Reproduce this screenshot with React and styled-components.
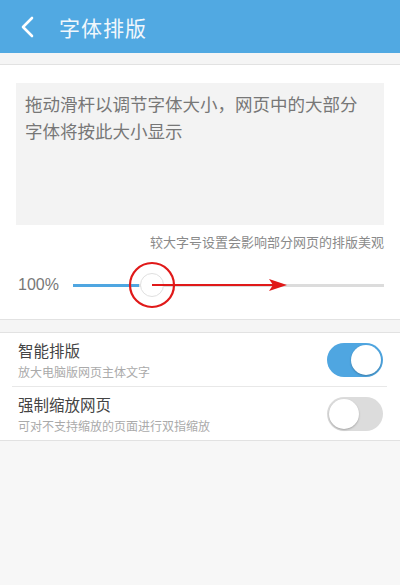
import React from 'react';
import styled, { createGlobalStyle } from 'styled-components';

const GlobalStyle = createGlobalStyle`
  html, body {
    margin: 0;
    padding: 0;
    background: #f7f7f7;
    font-family: "Noto Sans CJK SC", "Noto Sans", sans-serif;
  }
`;

const Page = styled.div`
  width: 400px;
  min-height: 585px;
  background: #f7f7f7;
`;

const Header = styled.div`
  height: 53px;
  background: #51a9e2;
  display: flex;
  align-items: center;
  padding-left: 20px;
  box-sizing: border-box;
`;

const BackButton = styled.svg`
  width: 16px;
  height: 22px;
  margin-right: 23px;
`;

const HeaderTitle = styled.div`
  color: #f0f7fc;
  font-size: 21px;
  letter-spacing: 1px;
`;

const Strip = styled.div`
  height: 11px;
  background: #f5f5f5;
  border-bottom: 1px solid #e2e2e2;
`;

const Panel = styled.div`
  background: #fff;
  padding: 18px 16px 0;
  border-bottom: 1px solid #e2e2e2;
`;

const Preview = styled.div`
  height: 142px;
  background: #f3f3f3;
  padding: 7px 20px 6px 9px;
  box-sizing: border-box;
  color: #777;
  font-size: 17.5px;
  line-height: 27px;
`;

const Hint = styled.div`
  margin-top: 8px;
  text-align: right;
  color: #8a8a8a;
  font-size: 13px;
  line-height: 18px;
`;

const SliderRow = styled.div`
  height: 68px;
  display: flex;
  align-items: center;
`;

const Percent = styled.div`
  width: 55px;
  padding-left: 2px;
  color: #777;
  font-family: "Liberation Sans", Arial, sans-serif;
  font-size: 16px;
`;

const Track = styled.div`
  position: relative;
  flex: 1;
  height: 3px;
  background: #dcdcdc;
`;

const Fill = styled.div`
  position: absolute;
  left: 0;
  top: 0;
  height: 3px;
  background: #4fa6e1;
`;

const Thumb = styled.div`
  position: absolute;
  top: -11px;
  width: 24px;
  height: 24px;
  border-radius: 50%;
  background: #fff;
  border: 1px solid #e0e0e0;
  box-sizing: border-box;
`;

const Annotation = styled.svg`
  position: absolute;
  left: 0;
  top: -26px;
  overflow: visible;
`;

const Gap = styled.div`
  height: 12px;
  background: #f5f5f5;
  border-bottom: 1px solid #e2e2e2;
`;

const List = styled.div`
  background: #fff;
  border-bottom: 1px solid #e2e2e2;
`;

const Row = styled.div`
  height: 53px;
  display: flex;
  align-items: center;
  justify-content: space-between;
  padding: 0 17px 0 18px;
`;

const RowText = styled.div`
  display: flex;
  flex-direction: column;
`;

const RowTitle = styled.div`
  color: #444;
  font-size: 15.5px;
  line-height: 20px;
`;

const RowSub = styled.div`
  margin-top: 4px;
  color: #aaa;
  font-size: 12px;
  line-height: 16px;
`;

const Divider = styled.div`
  height: 1px;
  background: #e8e8e8;
  margin: 0 13px 0 12px;
`;

const Switch = styled.div`
  position: relative;
  width: 56px;
  height: 34px;
  border-radius: 17px;
  background: ${p => (p.on ? '#4fa6e1' : '#dcdcdc')};
  flex-shrink: 0;
`;

const Knob = styled.div`
  position: absolute;
  top: 2px;
  ${p => (p.on ? 'right: 2px;' : 'left: 2px;')}
  width: 30px;
  height: 30px;
  border-radius: 50%;
  background: #fff;
  box-shadow: 0 1px 2px rgba(0, 0, 0, 0.25);
`;

function Toggle({ on }) {
  return (
    <Switch on={on}>
      <Knob on={on} />
    </Switch>
  );
}

export default function App() {
  return (
    <Page>
      <GlobalStyle />
      <Header>
        <BackButton viewBox="0 0 16 22">
          <polyline points="12,2 3,11 12,20" fill="none" stroke="#fff" strokeWidth="2.6" strokeLinecap="round" strokeLinejoin="round" />
        </BackButton>
        <HeaderTitle>字体排版</HeaderTitle>
      </Header>
      <Strip />
      <Panel>
        <Preview>拖动滑杆以调节字体大小，网页中的大部分字体将按此大小显示</Preview>
        <Hint>较大字号设置会影响部分网页的排版美观</Hint>
        <SliderRow>
          <Percent>100%</Percent>
          <Track>
            <Fill style={{ width: 66 }} />
            <Thumb style={{ left: 67 }} />
            <Annotation width="230" height="54" viewBox="0 0 230 54">
              <line x1="79" y1="27" x2="200" y2="27" stroke="#e01919" strokeWidth="2" />
              <polygon points="196,21 214,27 196,33 200,27" fill="#e01919" />
              <circle cx="79" cy="27" r="22" fill="none" stroke="#e01919" strokeWidth="2.2" />
            </Annotation>
          </Track>
        </SliderRow>
      </Panel>
      <Gap />
      <List>
        <Row>
          <RowText>
            <RowTitle>智能排版</RowTitle>
            <RowSub>放大电脑版网页主体文字</RowSub>
          </RowText>
          <Toggle on />
        </Row>
        <Divider />
        <Row>
          <RowText>
            <RowTitle>强制缩放网页</RowTitle>
            <RowSub>可对不支持缩放的页面进行双指缩放</RowSub>
          </RowText>
          <Toggle />
        </Row>
      </List>
    </Page>
  );
}
